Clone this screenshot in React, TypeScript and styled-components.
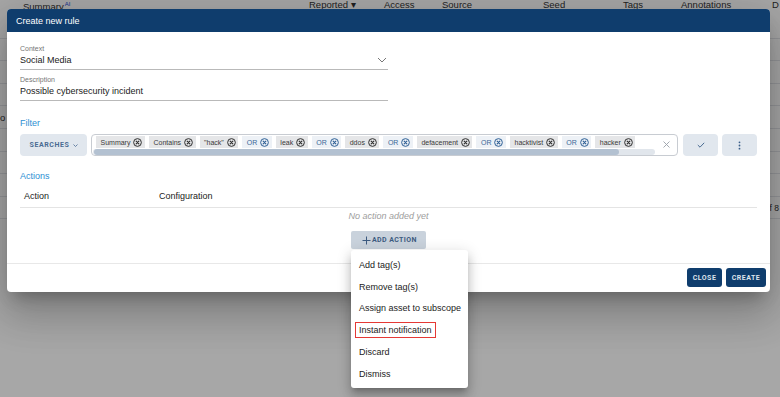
import React from 'react';
import styled, { createGlobalStyle } from 'styled-components';

const GlobalStyle = createGlobalStyle`
  html, body { margin: 0; padding: 0; }
  body { font-family: "Liberation Sans", Arial, sans-serif; background: #fff; }
  * { box-sizing: border-box; }
`;

const navy = '#0f3d6d';
const cols = '23px 286px 75px 58px 101px 80px 58px 91px 1fr';

const Screen = styled.div`
  position: relative;
  width: 780px;
  height: 397px;
  overflow: hidden;
  background: #fdfdfe;
`;

const TableHead = styled.div`
  display: grid;
  grid-template-columns: ${cols};
  height: 16px;
  font-size: 9.5px;
  line-height: 9px;
  color: #333;
`;

const HeadCell = styled.span`
  white-space: nowrap;
  sup { color: #2b4fd6; font-size: 6px; vertical-align: 4px; margin-left: 1px; }
`;

const TableRow = styled.div`
  display: grid;
  grid-template-columns: ${cols};
  align-items: center;
  height: 22.6px;
  border-bottom: 1px solid #e2e4e8;
  font-size: 9.5px;
  color: #333;
  white-space: nowrap;
`;

const PagerText = styled.span`
  grid-column: 8 / span 2;
  justify-self: end;
  margin-right: 1px;
  font-size: 8.5px;
`;

const Backdrop = styled.div`
  position: absolute;
  inset: 0;
  background: rgba(0, 0, 0, 0.34);
`;

const Dialog = styled.div`
  position: absolute;
  left: 7px;
  top: 9px;
  width: 763px;
  background: #fff;
  border-radius: 4px;
  box-shadow: 0 11px 15px -7px rgba(0,0,0,0.25), 0 24px 38px 3px rgba(0,0,0,0.14), 0 9px 46px 8px rgba(0,0,0,0.12);
`;

const DialogHeader = styled.div`
  height: 23px;
  display: flex;
  align-items: center;
  padding-left: 9px;
  background: ${navy};
  border-radius: 4px 4px 0 0;
  color: #fff;
  font-size: 9px;
`;

const DialogBody = styled.div`
  display: flex;
  flex-direction: column;
  padding: 12px 13px 14px;
`;

const Field = styled.div<{ $first?: boolean }>`
  width: 368px;
  margin-top: ${p => (p.$first ? 0 : 5)}px;
`;

const FieldLabel = styled.div`
  font-size: 7px;
  line-height: 9px;
  color: #757575;
`;

const FieldValue = styled.div`
  display: flex;
  align-items: center;
  justify-content: space-between;
  margin-top: 1px;
  padding-bottom: 3px;
  border-bottom: 1px solid #b9b9b9;
  font-size: 9px;
  line-height: 12px;
  color: #222;
`;

const SectionTitle = styled.div<{ $gap: number }>`
  margin-top: ${p => p.$gap}px;
  font-size: 9px;
  line-height: 12px;
  color: #2d8fd3;
`;

const FilterRow = styled.div`
  display: flex;
  height: 22px;
  margin-top: 5px;
`;

const GhostButton = styled.button<{ $w: number }>`
  flex: none;
  width: ${p => p.$w}px;
  margin-left: ${p => (p.$w > 40 ? 0 : 4)}px;
  display: flex;
  align-items: center;
  justify-content: center;
  gap: 3px;
  border: none;
  border-radius: 4px;
  background: #e1e7ee;
  color: #4a6b92;
  font-family: Roboto, "Liberation Sans", sans-serif;
  font-weight: 700;
  font-size: 7px;
  letter-spacing: 0.6px;
  padding: 0;
`;

const ChipBox = styled.div`
  flex: 1;
  min-width: 0;
  display: flex;
  margin: 0 1px 0 4px;
  padding: 1px 0 0 1px;
  border: 1px solid #c8ccd2;
  border-radius: 4px;
  background: #fff;
`;

const ChipScroller = styled.div`
  flex: 1;
  min-width: 0;
  display: flex;
  flex-direction: column;
  gap: 1px;
  overflow: hidden;
`;

const ChipRow = styled.div`
  display: flex;
  gap: 4px;
  padding-left: 3px;
  overflow: hidden;
`;

const ScrollTrack = styled.div`
  height: 6px;
  border-radius: 3px;
  background: #e1e6ec;
`;

const ScrollThumb = styled.div`
  height: 100%;
  margin-left: 1px;
  border-radius: 3px;
  background: #b3c1d1;
`;

const Chip = styled.span<{ $or?: boolean }>`
  flex: none;
  display: inline-flex;
  align-items: center;
  gap: 3px;
  height: 12px;
  padding: 0 2.5px 0 4.5px;
  background: ${p => (p.$or ? '#edf1f6' : '#e5e6e8')};
  color: ${p => (p.$or ? '#3a6797' : '#3a3a3a')};
  font-size: 7px;
  white-space: nowrap;
`;

const ClearZone = styled.div`
  flex: none;
  width: 22px;
  display: flex;
  align-items: center;
  justify-content: center;
  padding-bottom: 2px;
`;

const ActionsHead = styled.div`
  display: grid;
  grid-template-columns: 135px 1fr;
  margin-top: 8px;
  padding: 0 0 5px 4px;
  border-bottom: 1px solid #e4e4e4;
  font-size: 9px;
  line-height: 12px;
  color: #222;
`;

const EmptyNote = styled.div`
  margin-top: 2px;
  text-align: center;
  font-size: 9px;
  line-height: 12px;
  font-style: italic;
  color: #9d9d9d;
`;

const AddWrap = styled.div`
  position: relative;
  align-self: center;
  margin-top: 9px;
`;

const AddButton = styled.button`
  display: flex;
  align-items: center;
  gap: 1px;
  width: 75px;
  height: 18px;
  padding: 0 0 0 11px;
  border: none;
  border-radius: 2px;
  background: #c9d2dc;
  color: #3d5b80;
  font-family: Roboto, "Liberation Sans", sans-serif;
  font-weight: 700;
  font-size: 7px;
  letter-spacing: 0.4px;
`;

const Menu = styled.ul`
  position: absolute;
  top: 100%;
  left: 0;
  z-index: 2;
  width: 117px;
  margin: 1px 0 0;
  padding: 4px 0 3px;
  list-style: none;
  background: #fff;
  border-radius: 3px;
  box-shadow: 0 5px 5px -3px rgba(0,0,0,0.2), 0 8px 10px 1px rgba(0,0,0,0.14), 0 3px 14px 2px rgba(0,0,0,0.12);
`;

const MenuItem = styled.li`
  display: flex;
  align-items: center;
  height: 21.8px;
  padding-left: 8px;
  font-size: 9px;
  color: #222;
  white-space: nowrap;
`;

const MenuLabel = styled.span<{ $marked?: boolean }>`
  ${p => p.$marked && `
    margin-left: -4px;
    padding: 2px 3px 2px 3px;
    border: 1.5px solid #e53935;
  `}
`;

const DialogFooter = styled.div`
  display: flex;
  justify-content: flex-end;
  gap: 4px;
  padding: 4px 4px 5px;
  border-top: 1px solid #e8e8e8;
`;

const SolidButton = styled.button<{ $w: number }>`
  width: ${p => p.$w}px;
  height: 19px;
  padding: 0;
  border: none;
  border-radius: 3px;
  background: ${navy};
  color: #dde4ec;
  font-family: Roboto, "Liberation Sans", sans-serif;
  font-weight: 700;
  font-size: 7px;
  letter-spacing: 0.5px;
`;

const CircleX = ({ color }: { color: string }) => (
  <svg width="9" height="9" viewBox="0 0 10 10">
    <circle cx="5" cy="5" r="4.3" fill="none" stroke={color} strokeWidth="1.1" />
    <path d="M3.5 3.5L6.5 6.5M6.5 3.5L3.5 6.5" stroke={color} strokeWidth="1.3" strokeLinecap="round" />
  </svg>
);

const chips: { label: string; or?: boolean }[] = [
  { label: 'Summary' },
  { label: 'Contains' },
  { label: '"hack"' },
  { label: 'OR', or: true },
  { label: 'leak' },
  { label: 'OR', or: true },
  { label: 'ddos' },
  { label: 'OR', or: true },
  { label: 'defacement' },
  { label: 'OR', or: true },
  { label: 'hacktivist' },
  { label: 'OR', or: true },
  { label: 'hacker' },
];

const menuItems = [
  'Add tag(s)',
  'Remove tag(s)',
  'Assign asset to subscope',
  'Instant notification',
  'Discard',
  'Dismiss',
];

// share of the chip list that fits in the box
const visibleShare = 0.935;

export default function App() {
  return (
    <Screen>
      <GlobalStyle />
      <TableHead>
        <span />
        <HeadCell>Summary<sup>AI</sup></HeadCell>
        <HeadCell>Reported ▾</HeadCell>
        <HeadCell>Access</HeadCell>
        <HeadCell>Source</HeadCell>
        <HeadCell>Seed</HeadCell>
        <HeadCell>Tags</HeadCell>
        <HeadCell>Annotations</HeadCell>
        <HeadCell>D</HeadCell>
      </TableHead>
      {Array.from({ length: 9 }).map((_, i) => (
        <TableRow key={i}>
          {i === 4 && <span>o</span>}
          {i === 8 && <PagerText>of 8</PagerText>}
        </TableRow>
      ))}
      <Backdrop />

      <Dialog>
        <DialogHeader>Create new rule</DialogHeader>
        <DialogBody>
          <Field $first>
            <FieldLabel>Context</FieldLabel>
            <FieldValue>
              Social Media
              <svg width="10" height="6" viewBox="0 0 10 6" style={{ marginRight: 1 }}>
                <path d="M1 1l4 4 4-4" fill="none" stroke="#777" strokeWidth="1" />
              </svg>
            </FieldValue>
          </Field>
          <Field>
            <FieldLabel>Description</FieldLabel>
            <FieldValue>Possible cybersecurity incident</FieldValue>
          </Field>

          <SectionTitle $gap={16}>Filter</SectionTitle>
          <FilterRow>
            <GhostButton $w={67}>
              SEARCHES
              <svg width="5" height="3" viewBox="0 0 5 3">
                <path d="M0.5 0.5l2 2 2-2" fill="none" stroke="#4a6b92" strokeWidth="0.8" />
              </svg>
            </GhostButton>
            <ChipBox>
              <ChipScroller>
                <ChipRow>
                  {chips.map((c, i) => (
                    <Chip key={i} $or={c.or}>
                      {c.label}
                      <CircleX color={c.or ? '#2e5f95' : '#2f2f2f'} />
                    </Chip>
                  ))}
                </ChipRow>
                <ScrollTrack>
                  <ScrollThumb style={{ width: `${visibleShare * 100}%` }} />
                </ScrollTrack>
              </ChipScroller>
              <ClearZone>
                <svg width="7" height="7" viewBox="0 0 7 7">
                  <path d="M0.5 0.5l6 6M6.5 0.5l-6 6" stroke="#9aa0a8" strokeWidth="0.9" />
                </svg>
              </ClearZone>
            </ChipBox>
            <GhostButton $w={35}>
              <svg width="8" height="6" viewBox="0 0 8 6">
                <path d="M0.8 3l2.2 2.2L7.2 0.8" fill="none" stroke="#4a6b92" strokeWidth="1" />
              </svg>
            </GhostButton>
            <GhostButton $w={35}>
              <svg width="3" height="9" viewBox="0 0 3 9">
                <circle cx="1.5" cy="1.3" r="0.9" fill="#3b5f8a" />
                <circle cx="1.5" cy="4.5" r="0.9" fill="#3b5f8a" />
                <circle cx="1.5" cy="7.7" r="0.9" fill="#3b5f8a" />
              </svg>
            </GhostButton>
          </FilterRow>

          <SectionTitle $gap={14}>Actions</SectionTitle>
          <ActionsHead>
            <span>Action</span>
            <span>Configuration</span>
          </ActionsHead>
          <EmptyNote>No action added yet</EmptyNote>
          <AddWrap>
            <AddButton>
              <svg width="9" height="9" viewBox="0 0 9 9">
                <path d="M4.5 0.5v8M0.5 4.5h8" stroke="#3d5b80" strokeWidth="1" />
              </svg>
              ADD ACTION
            </AddButton>
            <Menu>
              {menuItems.map(item => (
                <MenuItem key={item}>
                  <MenuLabel $marked={item === 'Instant notification'}>{item}</MenuLabel>
                </MenuItem>
              ))}
            </Menu>
          </AddWrap>
        </DialogBody>
        <DialogFooter>
          <SolidButton $w={35}>CLOSE</SolidButton>
          <SolidButton $w={40}>CREATE</SolidButton>
        </DialogFooter>
      </Dialog>
    </Screen>
  );
}
